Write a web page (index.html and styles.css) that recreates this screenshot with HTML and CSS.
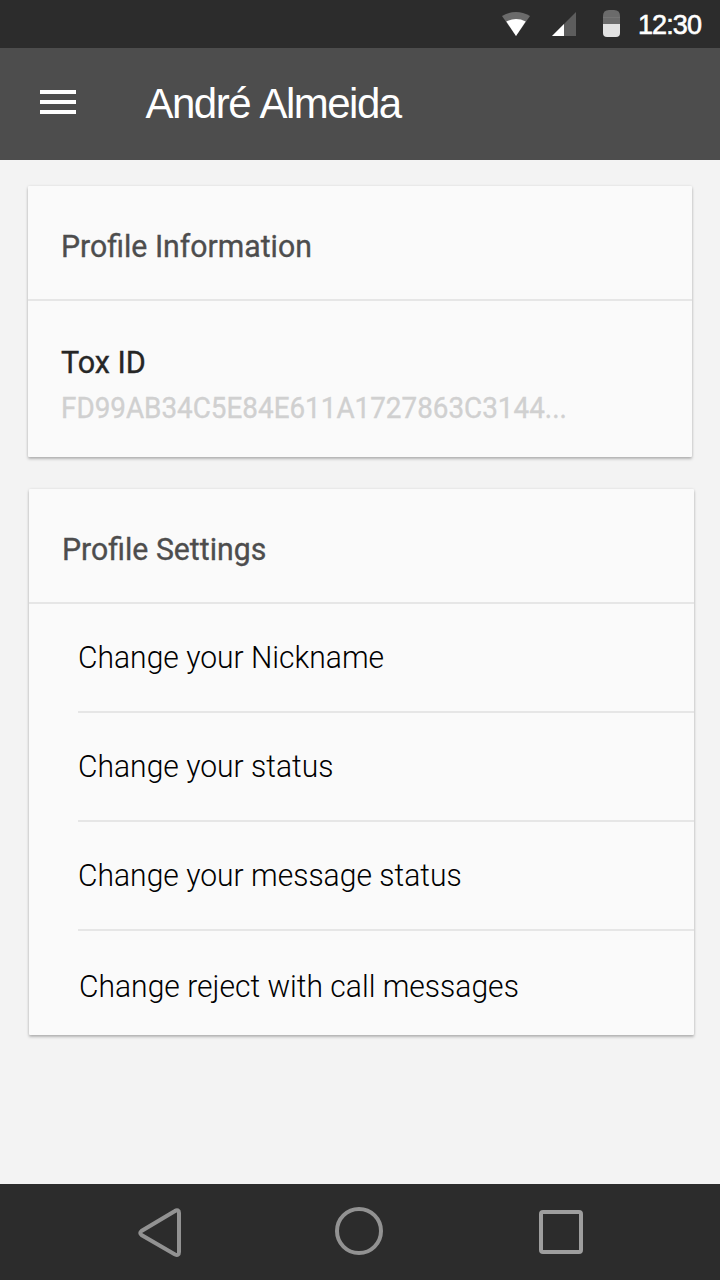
FILE: index.html
```html
<!DOCTYPE html>
<html lang="en">
<head>
<meta charset="utf-8">
<title>André Almeida</title>
<link rel="stylesheet" href="styles.css">
</head>
<body>
<div class="screen">
  <div class="status-bar">
    <svg class="wifi" width="28" height="24" viewBox="0 0 28 24">
      <path d="M0 4Q14 -4 28 4L14 24Z" fill="#6b6b6b"/>
      <path d="M4.3 9.4Q14 4.8 23.7 9.4L14 24Z" fill="#fff"/>
    </svg>
    <svg class="signal" width="24" height="24" viewBox="0 0 24 24">
      <path d="M24 0V24H0Z" fill="#5d5d5d"/>
      <path d="M12 12V24H0Z" fill="#fff"/>
    </svg>
    <svg class="battery" width="17" height="27" viewBox="0 0 17 27">
      <path d="M0 14V6Q0 0 6 0H11Q17 0 17 6V14Z" fill="#6b6b6b"/>
      <path d="M0 7.5H17" stroke="#757575"/>
      <path d="M0 14H17V23Q17 27 13 27H4Q0 27 0 23Z" fill="#e2e2e2"/>
    </svg>
    <span class="clock">12:30</span>
  </div>
  <header class="app-bar">
    <svg class="menu" width="36" height="24" viewBox="0 0 36 24">
      <path d="M0 2H36M0 12H36M0 22H36" stroke="#fff" stroke-width="4"/>
    </svg>
    <h1 class="title">André Almeida</h1>
  </header>
  <main class="content">
    <section class="card info">
      <h2 class="card-title"><span class="heading-text">Profile Information</span></h2>
      <div class="tox">
        <div class="tox-label"><span class="label-text">Tox ID</span></div>
        <div class="tox-id"><span class="id-text">FD99AB34C5E84E611A1727863C3144...</span></div>
      </div>
    </section>
    <section class="card settings">
      <h2 class="card-title"><span class="heading-text">Profile Settings</span></h2>
      <ul class="list">
        <li class="item"><span class="item-text">Change your Nickname</span></li>
        <li class="item"><span class="item-text">Change your status</span></li>
        <li class="item"><span class="item-text">Change your message status</span></li>
        <li class="item last"><span class="item-text">Change reject with call messages</span></li>
      </ul>
    </section>
  </main>
  <nav class="nav-bar">
    <svg class="back" width="44" height="50" viewBox="0 0 44 50">
      <path d="M40 2.5Q38.5 2 37 3L3.5 23Q1 25 3.5 27L37 46.5Q41 48 41 44V5Q41 3 40 2.5Z" fill="none" stroke="#929292" stroke-width="4"/>
    </svg>
    <svg class="home" width="48" height="48" viewBox="0 0 48 48">
      <circle cx="24" cy="24" r="22" fill="none" stroke="#929292" stroke-width="4"/>
    </svg>
    <svg class="recent" width="44" height="44" viewBox="0 0 44 44">
      <rect x="2" y="2" width="40" height="40" rx="2" fill="none" stroke="#9e9e9e" stroke-width="4"/>
    </svg>
  </nav>
</div>
</body>
</html>
```
FILE: styles.css
```css
* { box-sizing: border-box; }
body, h1, h2, ul { margin: 0; padding: 0; }
body { background: #f3f3f3; font-family: Roboto, sans-serif; }
.screen { display: flex; flex-direction: column; width: 720px; height: 1280px; overflow: hidden; }
svg { display: block; flex: none; }

.status-bar { display: flex; align-items: flex-start; height: 48px; padding-left: 502px; background: #2c2c2c; }
.wifi { margin-top: 12px; }
.signal { margin: 12px 0 0 22px; }
.battery { margin: 10px 0 0 27px; }
.clock { margin-left: 18px; font: 27px/50px "Liberation Sans", Arial, sans-serif; letter-spacing: -0.9px; color: #fff; -webkit-text-stroke: 0.6px #fff; }

.app-bar { display: flex; align-items: flex-start; height: 112px; padding-left: 40px; background: #4d4d4d; }
.menu { margin-top: 42px; }
.title { margin-left: 69.5px; font: 400 42px/112px "Liberation Sans", Arial, sans-serif; letter-spacing: -1.5px; word-spacing: 1.5px; color: #fff; }

.content { flex: 1; padding: 26px 26px 0 28px; }
.card { background: #fafafa; border-radius: 1px; box-shadow: 0 2px 3px rgba(0,0,0,.25), 0 0 3px rgba(0,0,0,.09); }
.info { width: 664px; height: 271px; }
.settings { width: 665px; height: 546px; margin: 32px 0 0 1px; }
.card-title { height: 115px; padding-left: 33px; border-bottom: 2px solid #e6e6e6; font-size: 31px; font-weight: 400; line-height: 121px; color: #4d4d4d; -webkit-text-stroke: 0.35px #4d4d4d; }
.tox { padding: 42px 0 0 33px; }
.tox-label { font-size: 31px; font-weight: 400; line-height: 40px; color: #262626; -webkit-text-stroke: 0.35px #262626; }
.tox-id { margin-top: 5px; font-size: 29px; font-weight: 400; line-height: 40px; color: #d0d0d0; -webkit-text-stroke: 0.35px #d0d0d0; }
.list { list-style: none; padding-left: 49px; }
.item { height: 109px; border-bottom: 2px solid #e6e6e6; font-size: 31px; font-weight: 300; line-height: 107px; color: #000; }
.last { height: 104px; padding-left: 1px; border: 0; line-height: 111px; }

/* Slightly condensed lettering */
.heading-text, .label-text, .id-text, .item-text { display: inline-block; white-space: nowrap; transform-origin: left center; }
.heading-text { transform: scaleX(.975); }
.label-text { transform: scaleX(.985); }
.id-text { transform: scaleX(.96); }
.item-text { transform: scaleX(.969); }

.nav-bar { display: flex; align-items: flex-start; height: 96px; padding-left: 138px; background: #2c2c2c; }
.back { margin-top: 24px; }
.home { margin: 23px 0 0 153px; }
.recent { margin: 26px 0 0 156px; }
```
